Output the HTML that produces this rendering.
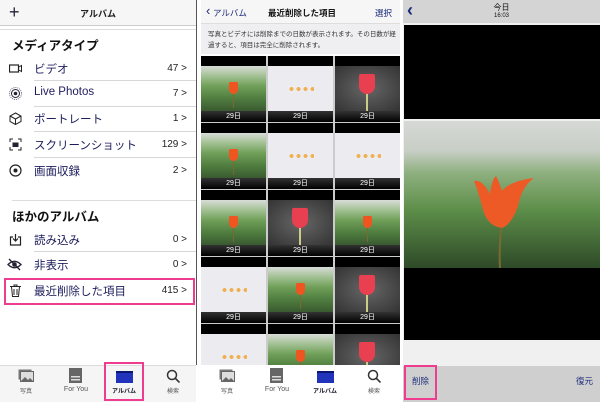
<!DOCTYPE html><html><head><meta charset="utf-8"><style>
*{margin:0;padding:0;box-sizing:border-box}
body{width:600px;height:402px;overflow:hidden;background:#fff;font-family:"Liberation Sans","Noto Sans CJK JP",sans-serif;position:relative;color:#1a1a4a}
.a{position:absolute}
.row{position:absolute;left:0;width:196px;height:25px;font-size:11.5px;color:#1c1c5c}
.row .ic{position:absolute;left:9px;top:6px;width:13px;height:13px}
.row .t{position:absolute;left:34px;top:5px}
.row .n{position:absolute;right:9px;top:7px;font-size:10px;color:#222}
.sep{position:absolute;left:34px;width:162px;height:1px;background:#d8d8d8}
.cell{position:absolute;width:65px;height:66px;background:#000}
.cell .img{position:absolute;left:0;top:10px;width:65px;height:45px;overflow:hidden}
.cell .lb{position:absolute;left:0;bottom:0;width:65px;height:11px;color:#fff;font-size:7px;text-align:center;line-height:11px;background:linear-gradient(#333,#000)}
.g{background:linear-gradient(#d8dcd8 0%,#a8c49a 20%,#6f9f58 45%,#4d7a3e 75%,#3a5a30 100%)}
.w{background:#ecebf0}
.d{background:radial-gradient(ellipse at 50% 50%,#666,#333)}
.tab{position:absolute;font-size:6px;color:#555;text-align:center;width:40px}
</style></head><body>
<div class="a" style="left:0;top:0;width:196px;height:26px;background:#f6f6f6;border-bottom:1px solid #ccc"></div>
<div class="a" style="left:9px;top:2px;font-size:18px;color:#223;font-weight:300">+</div>
<div class="a" style="left:0;width:196px;top:7px;text-align:center;font-size:9px;color:#222;font-weight:bold">アルバム</div>
<div class="a" style="left:0;top:29px;width:196px;height:1px;background:#ddd"></div>
<div class="a" style="left:12px;top:35px;font-size:12.5px;font-weight:bold;color:#111">メディアタイプ</div>
<div class="row" style="top:56px"><svg class="ic" viewBox="0 0 13 13"><rect x="0.5" y="3" width="9" height="7" fill="none" stroke="#222" stroke-width="1.2"/><path d="M10 5l2.5-1.5v6L10 8" fill="none" stroke="#222"/></svg><span class="t">ビデオ</span><span class="n">47 &gt;</span></div>
<div class="sep" style="top:80px"></div>
<div class="row" style="top:81px"><svg class="ic" viewBox="0 0 13 13"><circle cx="6.5" cy="6.5" r="6" fill="none" stroke="#667" stroke-dasharray="1 1"/><circle cx="6.5" cy="6.5" r="4" fill="none" stroke="#223"/><circle cx="6.5" cy="6.5" r="1.8" fill="#223"/></svg><span class="t">Live Photos</span><span class="n">7 &gt;</span></div>
<div class="sep" style="top:106px"></div>
<div class="row" style="top:106px"><svg class="ic" viewBox="0 0 13 13"><path d="M6.5 1L12 4v5.5L6.5 12.5 1 9.5V4z M1 4l5.5 3 5.5-3 M6.5 7v5.5" fill="none" stroke="#222"/></svg><span class="t">ポートレート</span><span class="n">1 &gt;</span></div>
<div class="sep" style="top:131px"></div>
<div class="row" style="top:132px"><svg class="ic" viewBox="0 0 13 13"><path d="M1 4V1h3M9 1h3v3M12 9v3H9M4 12H1V9" fill="none" stroke="#222"/><rect x="3.5" y="4.5" width="6" height="4.5" fill="#223"/></svg><span class="t">スクリーンショット</span><span class="n">129 &gt;</span></div>
<div class="sep" style="top:157px"></div>
<div class="row" style="top:158px"><svg class="ic" viewBox="0 0 13 13"><circle cx="6.5" cy="6.5" r="5.5" fill="none" stroke="#222" stroke-width="1.2"/><circle cx="6.5" cy="6.5" r="2" fill="#222"/></svg><span class="t">画面収録</span><span class="n">2 &gt;</span></div>
<div class="a" style="left:12px;top:200px;width:184px;height:1px;background:#ddd"></div>
<div class="a" style="left:12px;top:206px;font-size:12.5px;font-weight:bold;color:#111">ほかのアルバム</div>
<div class="row" style="top:227px"><svg class="ic" viewBox="0 0 13 13"><path d="M4 4H1.5v8h10V4H9 M6.5 1v7 M4 5.5l2.5 2.5 2.5-2.5" fill="none" stroke="#222" stroke-width="1.2"/></svg><span class="t">読み込み</span><span class="n">0 &gt;</span></div>
<div class="sep" style="top:251px"></div>
<div class="row" style="top:252px"><svg class="ic" style="width:15px;left:7px" viewBox="0 0 15 13"><path d="M1 6.5Q7.5 0 14 6.5Q7.5 13 1 6.5z" fill="none" stroke="#223" stroke-width="1.3"/><circle cx="7.5" cy="6.5" r="2.3" fill="#223"/><path d="M2 1l11 11" stroke="#223" stroke-width="1.3"/></svg><span class="t">非表示</span><span class="n">0 &gt;</span></div>
<div class="row" style="top:278px"><svg class="ic" viewBox="0 0 13 13"><path d="M1 2.5h11M5 2.5V1h3v1.5M2.5 2.5l1 10h6l1-10M5 5v6M8 5v6" fill="none" stroke="#222"/></svg><span class="t">最近削除した項目</span><span class="n">415 &gt;</span></div>
<div class="a" style="left:4px;top:278px;width:191px;height:27px;border:2.5px solid #ee3d8f"></div>
<div class="a" style="left:0;top:365px;width:196px;height:37px;background:#f5f5f5;border-top:1px solid #ddd"></div>
<svg class="a" style="left:18px;top:369px" width="16" height="13" viewBox="0 0 16 13"><rect x="0.5" y="0.5" width="13" height="10" fill="#777"/><rect x="2.5" y="2.5" width="13" height="10" fill="#ddd" stroke="#666"/><path d="M3 12l4-4 3 3 2-2 3 3" fill="#666"/></svg>
<div class="tab" style="left:6px;top:386px">写真</div>
<svg class="a" style="left:69px;top:368px" width="13" height="15"><rect width="13" height="15" fill="#666"/><rect x="2" y="8" width="9" height="1.5" fill="#ddd"/><rect x="2" y="11" width="9" height="1.5" fill="#ddd"/></svg>
<div class="tab" style="left:56px;top:386px;font-size:7px">For You</div>
<div class="a" style="left:116px;top:371px;width:17px;height:12px;background:#2233bb;border-top:2px solid #0a1670"></div>
<div class="tab" style="left:104px;top:386px;color:#112;font-weight:bold">アルバム</div>
<svg class="a" style="left:166px;top:369px" width="14" height="14"><circle cx="6" cy="6" r="4.5" fill="none" stroke="#333" stroke-width="1.5"/><path d="M9.5 9.5l4 4" stroke="#333" stroke-width="1.6"/></svg>
<div class="tab" style="left:153px;top:386px">検索</div>
<div class="a" style="left:104px;top:362px;width:40px;height:39px;border:2.5px solid #ee3d8f"></div>
<div class="a" style="left:196px;top:0;width:1px;height:365px;background:#555"></div>
<div class="a" style="left:201px;top:0;width:199px;height:24px;background:#f6f6f6;border-bottom:1px solid #ddd"></div>
<div class="a" style="left:206px;top:3px;font-size:13px;color:#1a2a7a">&#x2039;</div>
<div class="a" style="left:213px;top:7px;font-size:8.5px;color:#1a2a7a">アルバム</div>
<div class="a" style="left:268px;top:7px;font-size:8.5px;color:#111;font-weight:bold">最近削除した項目</div>
<div class="a" style="left:375px;top:7px;font-size:8.5px;color:#1a2a7a">選択</div>
<div class="a" style="left:201px;top:24px;width:199px;height:30px;background:#efeff2"></div>
<div class="a" style="left:208px;top:29px;width:188px;font-size:6.5px;line-height:11px;color:#333">写真とビデオには削除までの日数が表示されます。その日数が経過すると、項目は完全に削除されます。</div>
<div class="a" style="left:201px;top:56px;width:199px;height:309px;background:#ccc;overflow:hidden">
<div id="grid"></div>
</div>
<div class="a" style="left:201px;top:365px;width:199px;height:37px;background:#fff"></div>
<svg class="a" style="left:219px;top:369px" width="16" height="13" viewBox="0 0 16 13"><rect x="0.5" y="0.5" width="13" height="10" fill="#777"/><rect x="2.5" y="2.5" width="13" height="10" fill="#ddd" stroke="#666"/><path d="M3 12l4-4 3 3 2-2 3 3" fill="#666"/></svg>
<div class="tab" style="left:207px;top:386px">写真</div>
<svg class="a" style="left:270px;top:368px" width="13" height="15"><rect width="13" height="15" fill="#666"/><rect x="2" y="8" width="9" height="1.5" fill="#ddd"/><rect x="2" y="11" width="9" height="1.5" fill="#ddd"/></svg>
<div class="tab" style="left:257px;top:386px;font-size:7px">For You</div>
<div class="a" style="left:317px;top:371px;width:17px;height:12px;background:#2233bb;border-top:2px solid #0a1670"></div>
<div class="tab" style="left:305px;top:386px;color:#112;font-weight:bold">アルバム</div>
<svg class="a" style="left:367px;top:369px" width="14" height="14"><circle cx="6" cy="6" r="4.5" fill="none" stroke="#333" stroke-width="1.5"/><path d="M9.5 9.5l4 4" stroke="#333" stroke-width="1.6"/></svg>
<div class="tab" style="left:354px;top:386px">検索</div>
<div class="a" style="left:403px;top:0;width:197px;height:402px;background:#f0f0f0"></div>
<div class="a" style="left:403px;top:0;width:197px;height:23px;background:#d4d4d4"></div>
<div class="a" style="left:407px;top:0px;font-size:18px;color:#1a2a7a;font-weight:bold">&#x2039;</div>
<div class="a" style="left:403px;width:197px;top:2px;text-align:center;font-size:8px;color:#111">今日</div>
<div class="a" style="left:403px;width:197px;top:13px;text-align:center;font-size:6px;color:#111">16:03</div>
<div class="a" style="left:404px;top:25px;width:196px;height:94px;background:#000"></div>
<div class="a" style="left:404px;top:121px;width:196px;height:147px;background:linear-gradient(#d6d8d6 0%,#c8cfc6 20%,#8fb080 35%,#5e8f4a 60%,#2e4a28 100%)"></div>
<svg class="a" style="left:472px;top:176px" width="66" height="92"><path d="M2 5Q10 3 18 18Q20 3 24 0Q28 8 30 15Q38 5 62 2Q50 10 46 30Q40 48 30 52Q14 50 10 30Q6 15 2 5z" fill="#ee5a25"/><path d="M29 52Q27 75 28 92" stroke="#7a6a30" stroke-width="2" fill="none"/></svg>
<div class="a" style="left:404px;top:268px;width:196px;height:72px;background:#000"></div>
<div class="a" style="left:403px;top:366px;width:197px;height:36px;background:#cfcfcf"></div>
<div class="a" style="left:412px;top:375px;font-size:8.5px;color:#1a2a7a">削除</div>
<div class="a" style="left:576px;top:375px;font-size:8.5px;color:#1a2a7a">復元</div>
<div class="a" style="left:404px;top:365px;width:33px;height:35px;border:2.5px solid #ee3d8f"></div>
<script>
var t=['g','w','d','g','w','w','g','d','g','w','g','d','w','g','d'];
var h='';
for(var i=0;i<15;i++){var r=Math.floor(i/3),c=i%3;var x=c*67,y=r*67;var k=t[i];
var fl=k=='g'?'<div style="position:absolute;left:28px;top:16px;width:9px;height:12px;background:#ee5520;border-radius:2px 2px 6px 6px"></div><div style="position:absolute;left:32px;top:28px;width:1px;height:14px;background:#7a6a30"></div>':k=='w'?'<div style="position:absolute;left:20px;top:20px;width:26px;height:6px;background:radial-gradient(circle,#f0b050 40%,transparent 45%) 0 0/7px 6px"></div>':'<div style="position:absolute;left:24px;top:8px;width:16px;height:20px;background:#e84050;border-radius:2px 2px 8px 8px"></div><div style="position:absolute;left:31px;top:28px;width:2px;height:17px;background:#cc8"></div>';
h+='<div class="cell" style="left:'+x+'px;top:'+y+'px"><div class="img '+k+'">'+fl+'</div><div class="lb">29日</div></div>';}
document.getElementById('grid').innerHTML=h;
</script>
</body></html>
